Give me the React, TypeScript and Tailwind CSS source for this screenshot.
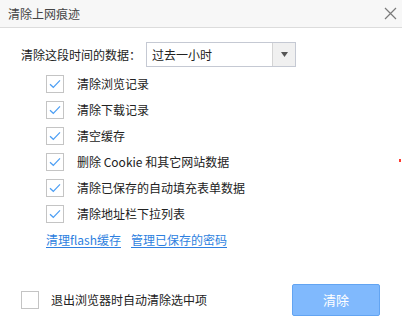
import React, { useState } from 'react';

const items = [
  '清除浏览记录',
  '清除下载记录',
  '清空缓存',
  '删除 Cookie 和其它网站数据',
  '清除已保存的自动填充表单数据',
  '清除地址栏下拉列表',
];

function Box({ checked }: { checked: boolean }) {
  return (
    <span className="flex h-[18px] w-[18px] shrink-0 items-center justify-center border border-[#c4c4c4] bg-white">
      {checked && (
        <svg width="12" height="10" viewBox="0 0 12 10" fill="none">
          <path d="M1 5.2 L4.3 8.3 L11 1.3" stroke="#4b9ef4" strokeWidth="1.2" />
        </svg>
      )}
    </span>
  );
}

export default function App() {
  const [checks, setChecks] = useState(items.map(() => true));
  const [autoClear, setAutoClear] = useState(false);

  return (
    <div
      className="relative h-[332px] w-[402px] overflow-hidden bg-white text-[12px] leading-[16px] text-[#222]"
      style={{ fontFamily: '"Microsoft YaHei", "Noto Sans CJK SC", "Noto Sans", sans-serif' }}
    >
      {/* 标题栏 */}
      <div className="flex h-[28px] items-center justify-between border-b border-[#dcdcdc] bg-[#f7f7f7] pl-[8px] pr-[5px]">
        <span className="text-[12px] text-[#444]">清除上网痕迹</span>
        <svg width="13" height="13" viewBox="0 0 13 13">
          <path d="M1 1 L12 12 M12 1 L1 12" stroke="#7a7a7a" strokeWidth="1.2" />
        </svg>
      </div>

      <div className="px-[21px] pt-[14px]">
        <div className="flex items-center">
          <span className="w-[125px] whitespace-nowrap">清除这段时间的数据：</span>
          <div className="flex h-[25px] w-[150px] items-stretch border border-[#c5c9d3]">
            <span className="flex flex-1 items-center pl-[5px]">过去一小时</span>
            <span className="flex w-[23px] items-center justify-center border-l border-[#d4d4d4] bg-[#f0f0f0]">
              <svg width="7" height="5" viewBox="0 0 7 5">
                <path d="M0 0 H7 L3.5 5 Z" fill="#555" />
              </svg>
            </span>
          </div>
        </div>

        <div className="mt-[4px] flex flex-col pl-[25px]">
          {items.map((t, i) => (
            <label
              key={t}
              className="flex h-[26px] cursor-pointer items-center gap-[13px]"
              onClick={() => setChecks(c => c.map((v, j) => (j === i ? !v : v)))}
            >
              <Box checked={checks[i]} />
              <span>{t}</span>
            </label>
          ))}
          <div className="flex h-[26px] items-center gap-[10px] text-[#2d7fe0]">
            <span className="underline underline-offset-2">清理flash缓存</span>
            <span className="underline underline-offset-2">管理已保存的密码</span>
          </div>
        </div>

        <div className="mt-[31px] flex items-center justify-between pr-[1px]">
          <label className="flex cursor-pointer items-center gap-[12px]" onClick={() => setAutoClear(v => !v)}>
            <Box checked={autoClear} />
            <span>退出浏览器时自动清除选中项</span>
          </label>
          <button className="h-[32px] w-[88px] rounded-[2px] border border-[#62a4f2] bg-[#80b9fd] text-[13px] text-white">
            清除
          </button>
        </div>
      </div>

      <span className="absolute left-[399px] top-[159px] h-[3px] w-[2px] bg-[#ff3b30]" />
    </div>
  );
}
